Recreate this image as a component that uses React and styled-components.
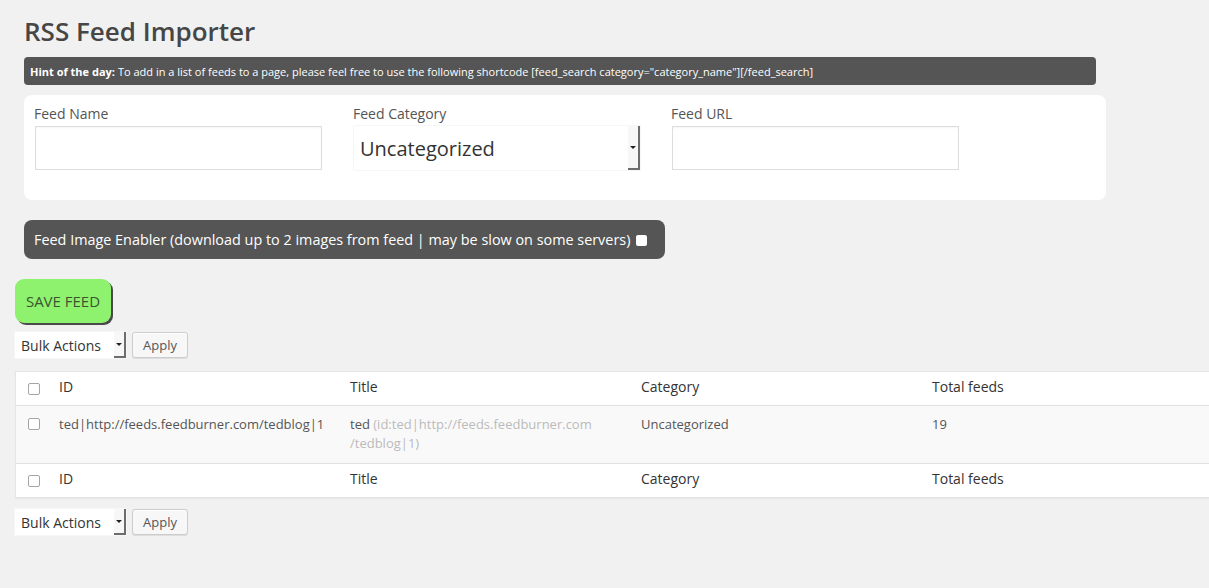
import styled, { createGlobalStyle } from "styled-components";

const GlobalStyle = createGlobalStyle`
    html, body {
        margin: 0;
        padding: 0;
        background: #f1f1f1;
        font-family: "Open Sans", "Liberation Sans", sans-serif;
        color: #444;
        overflow: hidden;
    }
`;

const Page = styled.div`
    padding: 14px 0 40px 15px;
    width: 1194px;
`;

const Header = styled.div`
    margin-left: 9px;
`;

const Title = styled.h2`
    margin: 0;
    font-size: 26px;
    font-weight: 600;
    line-height: 34px;
    color: #464646;
`;

const Hint = styled.div`
    margin-top: 9px;
    width: 1072px;
    height: 28px;
    box-sizing: border-box;
    padding: 0 6px;
    display: flex;
    align-items: center;
    background: #555;
    border-radius: 4px;
    color: #fff;
    font-size: 11px;

    b {
        font-weight: 700;
        margin-right: 3px;
    }
`;

const FormBox = styled.div`
    margin-top: 10px;
    width: 1082px;
    height: 105px;
    box-sizing: border-box;
    padding: 8px 10px 0;
    background: #fff;
    border-radius: 8px;
    display: grid;
    grid-template-columns: 319px 318px 319px;
`;

const Field = styled.div`
    display: flex;
    flex-direction: column;
    gap: 2px;
`;

const Label = styled.label`
    font-size: 14px;
    line-height: 21px;
    color: #555;
`;

const TextInput = styled.input`
    width: 287px;
    height: 44px;
    box-sizing: border-box;
    margin-left: 1px;
    border: 1px solid #ddd;
    box-shadow: inset 0 1px 2px rgba(0, 0, 0, 0.04);
    background: #fff;
    outline: none;
`;

const SelectWrap = styled.div`
    position: relative;
    width: ${({ $w }) => $w}px;
    height: ${({ $h }) => $h}px;
    margin-left: ${({ $ml }) => $ml || 0}px;
    background: #fff;
    box-shadow: 0 0 0 1px #f6f6f6;
`;

const NativeSelect = styled.select`
    appearance: none;
    width: 100%;
    height: 100%;
    border: none;
    background: transparent;
    font-family: "Open Sans", "Liberation Sans", sans-serif;
    font-size: ${({ $fs }) => $fs}px;
    color: #333;
    padding: 0 0 0 ${({ $pl }) => $pl}px;
    outline: none;
`;

const Arrow = styled.span`
    position: absolute;
    top: 0;
    right: 0;
    bottom: 0;
    width: 12px;
    background: #f7f7f7;
    border-right: 2px solid #6d6d6d;
    border-bottom: 2px solid #6d6d6d;
    box-sizing: border-box;
    pointer-events: none;
    display: flex;
    align-items: center;
    justify-content: center;

    &::after {
        content: "";
        border-left: 3px solid transparent;
        border-right: 3px solid transparent;
        border-top: 3px solid #222;
    }
`;

const Enabler = styled.div`
    margin-top: 20px;
    width: 641px;
    height: 39px;
    box-sizing: border-box;
    padding: 0 10px;
    display: flex;
    align-items: center;
    gap: 6px;
    background: #555;
    border-radius: 8px;
    color: #fff;
    font-size: 14.4px;
`;

const WhiteCheck = styled.span`
    width: 11px;
    height: 11px;
    background: #fff;
    border-radius: 2px;
    margin-top: 1px;
`;

const SaveButton = styled.button`
    margin-top: 20px;
    width: 96px;
    height: 44px;
    border: none;
    border-radius: 9px;
    background: #8ff26e;
    box-shadow: 2px 2px 0 #4a4a4a;
    font-family: "Open Sans", "Liberation Sans", sans-serif;
    font-size: 15px;
    color: #3a5530;
    padding: 0;
    cursor: pointer;
`;

const BulkRow = styled.div`
    display: flex;
    gap: 6px;
    margin-top: ${({ $mt }) => $mt}px;
`;

const ApplyButton = styled.button`
    height: 26px;
    width: 56px;
    padding: 0;
    border: 1px solid #ccc;
    border-radius: 3px;
    background: #f7f7f7;
    box-shadow: 0 1px 0 #fff inset, 0 1px 0 rgba(0, 0, 0, 0.08);
    font-family: "Open Sans", "Liberation Sans", sans-serif;
    font-size: 13px;
    color: #555;
`;

const Table = styled.div`
    margin-top: 13px;
    background: #fff;
    box-shadow: 0 1px 1px rgba(0, 0, 0, 0.04);
    border: 1px solid #e5e5e5;
    border-right: none;
`;

const Row = styled.div`
    display: grid;
    grid-template-columns: 33px 291px 291px 291px 1fr;
    align-items: ${({ $head }) => ($head ? "center" : "start")};
    min-height: ${({ $head }) => ($head ? 34 : 57)}px;
    padding-bottom: ${({ $head }) => ($head ? 3 : 0)}px;
    background: ${({ $alt }) => ($alt ? "#f9f9f9" : "#fff")};
    border-top: ${({ $top }) => ($top ? "1px solid #e1e1e1" : "none")};
    border-bottom: ${({ $bottom }) => ($bottom ? "1px solid #e1e1e1" : "none")};
    box-sizing: border-box;
`;

const Cell = styled.div`
    padding: ${({ $head }) => ($head ? "0 10px" : "9px 10px 8px")};
    font-size: ${({ $head }) => ($head ? 14 : 13)}px;
    line-height: ${({ $head }) => ($head ? 20 : 19)}px;
    color: ${({ $head }) => ($head ? "#333" : "#555")};
`;

const CheckCell = styled.div`
    padding: ${({ $head }) => ($head ? "3px 0 0 12px" : "12px 0 0 12px")};
    display: flex;
`;

const Check = styled.input.attrs({ type: "checkbox" })`
    appearance: none;
    margin: 0;
    width: 12px;
    height: 12px;
    border: 1px solid #a5a5a5;
    border-radius: 2px;
    background: #fff;
`;

const Muted = styled.span`
    color: #bbb;
`;

function Bulk({ mt }) {
    return (
        <BulkRow $mt={mt}>
            <SelectWrap $w={111} $h={26}>
                <NativeSelect $fs={14} $pl={6}>
                    <option>Bulk Actions</option>
                    <option>Delete</option>
                </NativeSelect>
                <Arrow />
            </SelectWrap>
            <ApplyButton>Apply</ApplyButton>
        </BulkRow>
    );
}

function HeadRow({ top, bottom }) {
    return (
        <Row $head $top={top} $bottom={bottom}>
            <CheckCell $head>
                <Check />
            </CheckCell>
            <Cell $head>ID</Cell>
            <Cell $head>Title</Cell>
            <Cell $head>Category</Cell>
            <Cell $head>Total feeds</Cell>
        </Row>
    );
}

export default function App() {
    return (
        <>
            <GlobalStyle />
            <Page>
                <Header>
                    <Title>RSS Feed Importer</Title>
                    <Hint>
                        <b>Hint of the day:</b> To add in a list of feeds to a
                        page, please feel free to use the following shortcode
                        [feed_search category="category_name"][/feed_search]
                    </Hint>
                    <FormBox>
                        <Field>
                            <Label>Feed Name</Label>
                            <TextInput type="text" />
                        </Field>
                        <Field>
                            <Label>Feed Category</Label>
                            <SelectWrap $w={286} $h={44} $ml={1}>
                                <NativeSelect $fs={20} $pl={6}>
                                    <option>Uncategorized</option>
                                </NativeSelect>
                                <Arrow />
                            </SelectWrap>
                        </Field>
                        <Field>
                            <Label>Feed URL</Label>
                            <TextInput type="text" />
                        </Field>
                    </FormBox>
                    <Enabler>
                        Feed Image Enabler (download up to 2 images from feed |
                        may be slow on some servers)
                        <WhiteCheck />
                    </Enabler>
                </Header>
                <SaveButton>SAVE FEED</SaveButton>
                <Bulk mt={9} />
                <Table>
                    <HeadRow bottom />
                    <Row $alt>
                        <CheckCell>
                            <Check />
                        </CheckCell>
                        <Cell>ted|http://feeds.feedburner.com/tedblog|1</Cell>
                        <Cell>
                            ted{" "}
                            <Muted>
                                (id:ted|http://feeds.feedburner.com
                                <br />
                                /tedblog|1)
                            </Muted>
                        </Cell>
                        <Cell>Uncategorized</Cell>
                        <Cell>19</Cell>
                    </Row>
                    <HeadRow top />
                </Table>
                <Bulk mt={11} />
            </Page>
        </>
    );
}
